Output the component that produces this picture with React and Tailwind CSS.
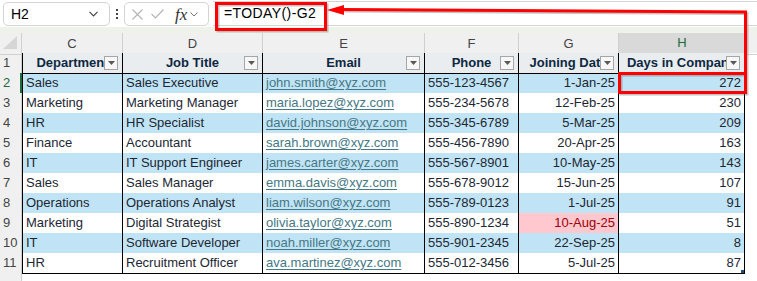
import React from "react";

const rows = [
  ["Sales", "Sales Executive", "john.smith@xyz.com", "555-123-4567", "1-Jan-25", "272"],
  ["Marketing", "Marketing Manager", "maria.lopez@xyz.com", "555-234-5678", "12-Feb-25", "230"],
  ["HR", "HR Specialist", "david.johnson@xyz.com", "555-345-6789", "5-Mar-25", "209"],
  ["Finance", "Accountant", "sarah.brown@xyz.com", "555-456-7890", "20-Apr-25", "163"],
  ["IT", "IT Support Engineer", "james.carter@xyz.com", "555-567-8901", "10-May-25", "143"],
  ["Sales", "Sales Manager", "emma.davis@xyz.com", "555-678-9012", "15-Jun-25", "107"],
  ["Operations", "Operations Analyst", "liam.wilson@xyz.com", "555-789-0123", "1-Jul-25", "91"],
  ["Marketing", "Digital Strategist", "olivia.taylor@xyz.com", "555-890-1234", "10-Aug-25", "51"],
  ["IT", "Software Developer", "noah.miller@xyz.com", "555-901-2345", "22-Sep-25", "8"],
  ["HR", "Recruitment Officer", "ava.martinez@xyz.com", "555-012-3456", "5-Jul-25", "87"],
];

const headers = ["Department", "Job Title", "Email", "Phone", "Joining Date", "Days in Company"];
const letters = ["C", "D", "E", "F", "G", "H"];
const grid = "grid grid-cols-[22px_101px_140px_162px_94px_100px_126px_12px]";

function FilterBtn() {
  return (
    <div className="absolute right-[4px] top-[3px] w-[14px] h-[14px] border border-[#a6a6a6] bg-[#f7f7f7] flex items-center justify-center">
      <svg width="7" height="4" viewBox="0 0 7 4"><polygon points="0,0 7,0 3.5,4" fill="#595959" /></svg>
    </div>
  );
}

export default function App() {
  return (
    <div className="relative w-[757px] h-[281px] bg-white overflow-hidden font-['Liberation_Sans',sans-serif]">
      {/* formula bar */}
      <div className="h-[27px] flex items-start pt-[2px]">
        <div className="ml-[3px] w-[107px] h-[24px] border border-[#d4d4d4] rounded-[5px] flex items-center justify-between pl-[7px] pr-[11px] text-[14px] text-black">
          <span>H2</span>
          <svg width="9" height="6" viewBox="0 0 9 6"><polyline points="0.5,0.8 4.5,4.8 8.5,0.8" fill="none" stroke="#444" strokeWidth="1.2" /></svg>
        </div>
        <div className="w-[14px] h-[24px] flex flex-col items-center justify-center gap-[2px]">
          <div className="w-[2px] h-[2px] bg-[#444]" />
          <div className="w-[2px] h-[2px] bg-[#444]" />
          <div className="w-[2px] h-[2px] bg-[#444]" />
        </div>
        <div className="w-[85px] h-[24px] border border-[#d4d4d4] rounded-[5px] flex items-center pl-[7px] gap-[8px]">
          <svg width="11" height="11" viewBox="0 0 11 11"><path d="M0.5 0.5L10.5 10.5M10.5 0.5L0.5 10.5" stroke="#b3b3b3" strokeWidth="1.1" fill="none" /></svg>
          <svg width="13" height="10" viewBox="0 0 13 10"><polyline points="0.5,5 4.5,9 12.5,0.5" stroke="#b3b3b3" strokeWidth="1.1" fill="none" /></svg>
          <span className="font-['Liberation_Serif',serif] italic text-[17px] text-[#333] leading-none ml-[3px]">fx</span>
          <svg width="8" height="5" viewBox="0 0 8 5" className="-ml-[5px]"><polyline points="0.5,0.5 4,4 7.5,0.5" fill="none" stroke="#777" strokeWidth="1" /></svg>
        </div>
        <div className="ml-[4px] flex-1 h-[25px] -mt-[1px] border-y border-[#d4d4d4] flex items-center pl-[11px] text-[14px] text-black tracking-[0.4px]">
          =TODAY()-G2
        </div>
      </div>
      <div className="h-[6px] bg-[#eef2ea]" />

      {/* column headers */}
      <div className={`${grid} h-[20px] bg-[#f0f0f0] text-[13px] text-[#444]`}>
        <div className="relative border-r border-[#d0d0d0] border-b border-b-[#d0d0d0]">
          <svg className="absolute left-[3px] top-[3px]" width="14" height="13" viewBox="0 0 14 13"><polygon points="14,0 14,13 0,13" fill="#d6d6d6" /></svg>
        </div>
        {letters.map((l, i) => (
          <div
            key={l}
            className={
              i === 5
                ? "flex items-center justify-center bg-[#d9d9d9] text-[#1e6b3c] border-b-2 border-b-[#1e6b3c]"
                : "flex items-center justify-center border-r border-[#d0d0d0] border-b border-b-[#d0d0d0]"
            }
          >
            {l}
          </div>
        ))}
        <div className="border-b border-[#d0d0d0]" />
      </div>

      {/* header row */}
      <div className={`${grid} h-[20px]`}>
        <div className="bg-[#f0f0f0] border-r border-[#d0d0d0] border-b border-b-[#d8d8d8] flex items-center pl-[3px] text-[13px] text-[#444]">1</div>
        {headers.map((h, i) => (
          <div
            key={h}
            className={`relative overflow-hidden bg-[#e9edf0] border-b border-r border-black ${i === 0 ? "border-l" : ""} flex items-center justify-center whitespace-nowrap font-bold text-[13px] text-[#0e2841]`}
          >
            <span>{h}</span>
            <FilterBtn />
          </div>
        ))}
        <div />
      </div>

      {/* data rows */}
      {rows.map((r, ri) => {
        const blue = ri % 2 === 0;
        const bg = blue ? "bg-[#c0e4f5]" : "bg-white";
        const sel = ri === 0;
        return (
          <div key={ri} className={`${grid} h-[20px] text-[13px] text-[#1d2733]`}>
            <div
              className={`bg-[#f0f0f0] border-b border-[#d8d8d8] flex items-center pl-[3px] text-[13px] ${
                sel ? "text-[#1e6b3c] border-r-2 border-r-[#1e6b3c]" : "text-[#444] border-r border-r-[#d0d0d0]"
              }`}
            >
              {ri + 2}
            </div>
            <div className={`${bg} border-l border-r border-b border-black pl-[3px] flex items-center whitespace-nowrap overflow-hidden`}>{r[0]}</div>
            <div className={`${bg} border-r border-b border-black pl-[3px] flex items-center whitespace-nowrap overflow-hidden`}>{r[1]}</div>
            <div className={`${bg} border-r border-b border-black pl-[3px] flex items-center whitespace-nowrap overflow-hidden text-[#467886] underline underline-offset-[2px]`}>{r[2]}</div>
            <div className={`${bg} border-r border-b border-black pl-[3px] flex items-center whitespace-nowrap overflow-hidden`}>{r[3]}</div>
            <div
              className={`${ri === 7 ? "bg-[#ffc7ce] text-[#9c0006]" : bg} border-r border-b border-black pr-[3px] flex items-center justify-end whitespace-nowrap overflow-hidden`}
            >
              {r[4]}
            </div>
            <div className={`relative ${bg} border-r border-b border-black pr-[3px] flex items-center justify-end whitespace-nowrap overflow-hidden`}>
              {r[5]}
              {ri === 9 && <div className="absolute right-0 bottom-0 w-[3px] h-[3px] bg-[#1f4e79]" />}
            </div>
            <div />
          </div>
        );
      })}
      <div className={`${grid} h-[8px]`}>
        <div className="bg-[#f0f0f0] border-r border-[#d0d0d0]" />
      </div>

      {/* annotations */}
      <svg className="absolute left-0 top-0 pointer-events-none" width="757" height="281" viewBox="0 0 757 281">
        <g opacity="0.35" transform="translate(1.5,1.5)">
          <rect x="216.5" y="3.5" width="109" height="26" fill="none" stroke="#555" strokeWidth="3" />
          <rect x="619.5" y="73.5" width="126" height="19" fill="none" stroke="#555" strokeWidth="3" />
          <polyline points="343,9.5 745.5,12 745.5,73" fill="none" stroke="#555" strokeWidth="3" />
        </g>
        <rect x="216.5" y="3.5" width="109" height="26" fill="none" stroke="#ff0000" strokeWidth="3" />
        <polyline points="342,9.5 745.5,12 745.5,73" fill="none" stroke="#ff0000" strokeWidth="3" />
        <polygon points="327,10 344,5 344,15" fill="#ff0000" />
        <rect x="619.5" y="73.5" width="126" height="19" fill="none" stroke="#ff0000" strokeWidth="3" />
      </svg>
    </div>
  );
}
